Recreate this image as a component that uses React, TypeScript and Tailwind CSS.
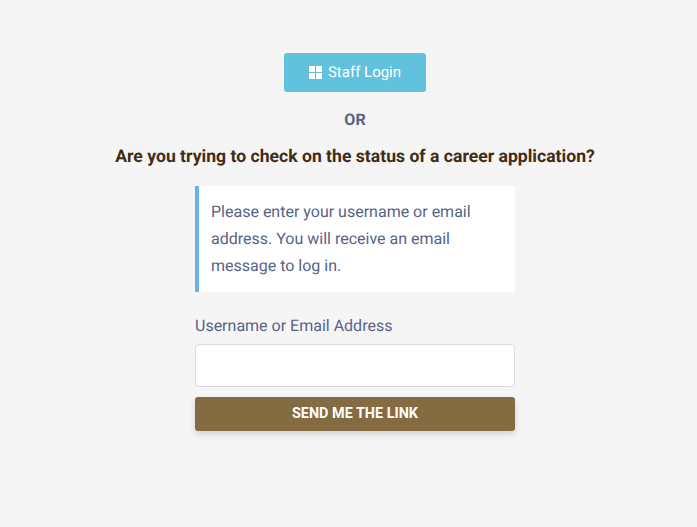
const App = () => {
    return (
        <div className="min-h-screen bg-[#f5f5f5] flex flex-col items-center pt-[53px] pl-[13px] font-['Roboto',sans-serif] text-[#566384] [text-rendering:geometricPrecision]">
            <a className="flex items-center justify-center gap-[6px] w-[142px] h-[39px] rounded-[3px] bg-[#62c2de] text-white text-[15px]">
                <svg width="13" height="13" viewBox="0 0 13 13" fill="currentColor">
                    <rect x="0" y="0" width="6" height="6"/>
                    <rect x="7" y="0" width="6" height="6"/>
                    <rect x="0" y="7" width="6" height="6"/>
                    <rect x="7" y="7" width="6" height="6"/>
                </svg>
                Staff Login
            </a>
            <p className="mt-[17px] text-[16px] leading-[22px] font-bold">OR</p>
            <h2 className="mt-[14px] text-[17.6px] leading-[24px] font-bold text-[#432c14] whitespace-nowrap">
                Are you trying to check on the status of a career application?
            </h2>
            <div className="mt-[17px] w-[320px] h-[106px] bg-white border-l-4 border-[#6fb1e6] pl-3 pr-4 py-3 text-[16px] leading-[27px]">
                Please enter your username or email address. You will receive an email message to log in.
            </div>
            <form className="mt-[22px] w-[320px] flex flex-col">
                <label className="text-[16px] leading-[24px]">Username or Email Address</label>
                <input type="text" className="mt-[6px] h-[43px] w-full bg-white border border-[#d9dbe0] rounded-[4px]"/>
                <button type="button" className="mt-[10px] h-[34px] w-full rounded-[3px] bg-[#856b41] text-white text-[14.4px] font-bold shadow-[0_3px_6px_rgba(0,0,0,0.15)]">
                    SEND ME THE LINK
                </button>
            </form>
        </div>
    )
}

export default App
